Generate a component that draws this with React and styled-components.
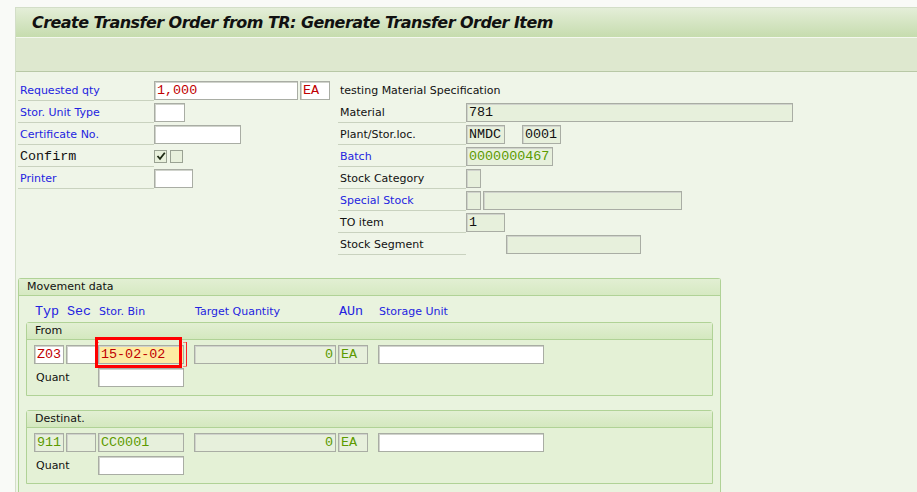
import styled, { createGlobalStyle } from "styled-components"

const GlobalStyle = createGlobalStyle`
    html, body {
        margin: 0;
        padding: 0;
        background: #f9faf7;
        height: 100%;
        overflow: hidden;
    }
    * { box-sizing: border-box; }
`

// x positions of the movement-data grid: field, gap, field, gap...
const MOVE_COLS = "30px 2px 30px 2px 86px 10px 142px 2px 30px 10px 166px"

const Field = ({ w, variant = "input", color, align, children }) => (
    <FieldBox $w={w} $variant={variant} $color={color} $align={align}>
        {children}
    </FieldBox>
)

const App = () => {
    return <>
        <GlobalStyle />
        <Window>
            <TitleBar>
                <Title>Create Transfer Order from TR: Generate Transfer Order Item</Title>
            </TitleBar>
            <Toolbar />
            <Content>
                <TopSection>
                    <LeftCol>
                        <Row>
                            <Label $blue>Requested qty</Label>
                            <Field w={144} color="#c00000">1,000</Field>
                            <Field w={30} color="#c00000">EA</Field>
                        </Row>
                        <Row>
                            <Label $blue>Stor. Unit Type</Label>
                            <Field w={31} />
                        </Row>
                        <Row>
                            <Label $blue>Certificate No.</Label>
                            <Field w={87} />
                        </Row>
                        <Row>
                            <Label $mono>Confirm</Label>
                            <CheckGroup>
                                <CheckBox>
                                    <svg width="10" height="10" viewBox="0 0 10 10">
                                        <path d="M1.5 5 L4 7.8 L8.8 1.8" fill="none" stroke="#1e2a14" strokeWidth="1.8" />
                                    </svg>
                                </CheckBox>
                                <CheckBox />
                            </CheckGroup>
                        </Row>
                        <Row>
                            <Label $blue>Printer</Label>
                            <Field w={39} />
                        </Row>
                    </LeftCol>
                    <RightCol>
                        <Row>
                            <Caption>testing Material Specification</Caption>
                        </Row>
                        <Row>
                            <Label $wide>Material</Label>
                            <Field w={327} variant="readonly">781</Field>
                        </Row>
                        <Row>
                            <Label $wide>Plant/Stor.loc.</Label>
                            <Field w={39} variant="readonly">NMDC</Field>
                            <Spacer $w={15} />
                            <Field w={39} variant="readonly">0001</Field>
                        </Row>
                        <Row>
                            <Label $wide $blue>Batch</Label>
                            <Field w={87} variant="readonly" color="#5c9a00">0000000467</Field>
                        </Row>
                        <Row>
                            <Label $wide>Stock Category</Label>
                            <Field w={15} variant="readonly" />
                        </Row>
                        <Row>
                            <Label $wide $blue>Special Stock</Label>
                            <Field w={15} variant="readonly" />
                            <Field w={199} variant="readonly" />
                        </Row>
                        <Row>
                            <Label $wide>TO item</Label>
                            <Field w={39} variant="readonly">1</Field>
                        </Row>
                        <Row>
                            <Label $wide>Stock Segment</Label>
                            <Spacer $w={40} />
                            <Field w={135} variant="readonly" />
                        </Row>
                    </RightCol>
                </TopSection>

                <Group>
                    <GroupHeader>Movement data</GroupHeader>
                    <GroupBody>
                        <MoveGrid $header>
                            <ColHead $col={1} $mono>Typ</ColHead>
                            <ColHead $col={3} $mono>Sec</ColHead>
                            <ColHead $col={5}>Stor. Bin</ColHead>
                            <ColHead $col={7}>Target Quantity</ColHead>
                            <ColHead $col={9} $mono>AUn</ColHead>
                            <ColHead $col={11}>Storage Unit</ColHead>
                        </MoveGrid>
                        <SubGroup>
                            <SubHeader>From</SubHeader>
                            <SubBody>
                                <MoveGrid>
                                    <Cell $col={1}><Field w={30} color="#c00000">Z03</Field></Cell>
                                    <Cell $col={3}><Field w={30} /></Cell>
                                    <Cell $col={5}>
                                        <Focus>
                                            <Field w={86} variant="highlight" color="#c00000">15-02-02</Field>
                                            <FocusBracket />
                                            <Marker />
                                        </Focus>
                                    </Cell>
                                    <Cell $col={7}><Field w={142} variant="readonly" color="#5c9a00" align="right">0</Field></Cell>
                                    <Cell $col={9}><Field w={30} variant="readonly" color="#5c9a00">EA</Field></Cell>
                                    <Cell $col={11}><Field w={166} /></Cell>
                                </MoveGrid>
                                <QuantRow>
                                    <QuantLabel>Quant</QuantLabel>
                                    <Field w={86} />
                                </QuantRow>
                            </SubBody>
                        </SubGroup>
                        <SubGroup>
                            <SubHeader>Destinat.</SubHeader>
                            <SubBody>
                                <MoveGrid>
                                    <Cell $col={1}><Field w={30} variant="readonly" color="#5c9a00">911</Field></Cell>
                                    <Cell $col={3}><Field w={30} variant="readonly" /></Cell>
                                    <Cell $col={5}><Field w={86} variant="readonly" color="#5c9a00">CC0001</Field></Cell>
                                    <Cell $col={7}><Field w={142} variant="readonly" color="#5c9a00" align="right">0</Field></Cell>
                                    <Cell $col={9}><Field w={30} variant="readonly" color="#5c9a00">EA</Field></Cell>
                                    <Cell $col={11}><Field w={166} /></Cell>
                                </MoveGrid>
                                <QuantRow>
                                    <QuantLabel>Quant</QuantLabel>
                                    <Field w={86} />
                                </QuantRow>
                            </SubBody>
                        </SubGroup>
                    </GroupBody>
                </Group>
            </Content>
        </Window>
    </>
}

const Window = styled.div`
    margin: 7px 0 0 15px;
    height: 485px;
    background: #eff5e8;
    border-left: 1px solid #d3dec8;
    border-top: 1px solid #d3dec8;
    display: flex;
    flex-direction: column;
    overflow: hidden;
`
const TitleBar = styled.div`
    flex: none;
    height: 30px;
    display: flex;
    align-items: center;
    padding-left: 16px;
    background: linear-gradient(#e4eed8, #c6dcae);
    border-bottom: 1px solid #f4f8ee;
`
const Title = styled.h1`
    margin: 0;
    font-family: "DejaVu Sans", sans-serif;
    font-size: 16px;
    font-weight: bold;
    font-style: italic;
    letter-spacing: -0.55px;
    color: #111;
`
const Toolbar = styled.div`
    flex: none;
    height: 34px;
    background: #dee8cf;
    border-bottom: 1px solid #b8c8a6;
`
const Content = styled.div`
    flex: 1;
    padding: 7px 0 0 2px;
    display: flex;
    flex-direction: column;
`
const TopSection = styled.div`
    display: flex;
`
const LeftCol = styled.div`
    width: 320px;
    display: flex;
    flex-direction: column;
`
const RightCol = styled.div`
    display: flex;
    flex-direction: column;
`
const Row = styled.div`
    height: 22px;
    display: flex;
    align-items: center;
`
const Label = styled.div`
    width: ${p => p.$wide ? "128px" : "136px"};
    height: 22px;
    padding: 3px 0 0 2px;
    border-bottom: 1px solid #c9d2bf;
    align-self: flex-start;
    line-height: 17px;
    color: ${p => p.$blue ? "#2424e0" : "#111"};
    font-family: ${p => p.$mono ? `"Liberation Mono", monospace` : `"DejaVu Sans", sans-serif`};
    font-size: ${p => p.$mono ? "13.4px" : "11px"};
    white-space: nowrap;
`
const Caption = styled.div`
    padding-left: 2px;
    font-family: "DejaVu Sans", sans-serif;
    font-size: 11px;
    color: #111;
`
const Spacer = styled.div`
    width: ${p => p.$w}px;
    flex: none;
`
const FieldBox = styled.div`
    width: ${p => p.$w}px;
    height: 19px;
    flex: none;
    margin-right: 2px;
    padding: 0 2px;
    display: flex;
    align-items: center;
    justify-content: ${p => p.$align === "right" ? "flex-end" : "flex-start"};
    border: 1px solid #a9ada4;
    box-shadow: inset 1px 1px 0 #d0d3cc;
    background: ${p => p.$variant === "readonly" ? "#e7f0dc" : p.$variant === "highlight" ? "#fdeca2" : "#fff"};
    color: ${p => p.$color || "#111"};
    font-family: "Liberation Mono", monospace;
    font-size: 13.4px;
    white-space: nowrap;
    overflow: hidden;
`
const CheckGroup = styled.div`
    display: flex;
    gap: 3px;
`
const CheckBox = styled.div`
    width: 13px;
    height: 13px;
    border: 1px solid #9aa293;
    background: #e8f0dc;
    display: flex;
    align-items: center;
    justify-content: center;
`
const Group = styled.div`
    margin-top: 23px;
    width: 703px;
    flex: 1;
    border: 1px solid #b0d296;
    border-bottom: none;
    border-radius: 3px 3px 0 0;
    background: #e9f3de;
    display: flex;
    flex-direction: column;
`
const GroupHeader = styled.div`
    height: 17px;
    padding-left: 8px;
    line-height: 16px;
    background: linear-gradient(#e2efd3, #d6e9c2);
    border-bottom: 1px solid #b0d296;
    font-family: "DejaVu Sans", sans-serif;
    font-size: 11px;
    color: #111;
`
const GroupBody = styled.div`
    padding: 5px 7px 0 7px;
    display: flex;
    flex-direction: column;
`
const MoveGrid = styled.div`
    display: grid;
    grid-template-columns: ${MOVE_COLS};
    height: ${p => p.$header ? "20px" : "22px"};
    align-items: center;
    padding-left: 7px;
`
const ColHead = styled.div`
    grid-column: ${p => p.$col};
    padding-left: 2px;
    white-space: nowrap;
    color: #2424e0;
    font-family: ${p => p.$mono ? `"Liberation Mono", monospace` : `"DejaVu Sans", sans-serif`};
    font-size: ${p => p.$mono ? "13.4px" : "11px"};
`
const Cell = styled.div`
    grid-column: ${p => p.$col};
`
const SubGroup = styled.div`
    margin-top: 1px;
    margin-bottom: 13px;
    height: 74px;
    border: 1px solid #b0d296;
    border-radius: 3px 3px 0 0;
    background: #e4f1d6;
`
const SubHeader = styled.div`
    height: 17px;
    padding-left: 8px;
    line-height: 16px;
    background: linear-gradient(#e2efd3, #d4e8bf);
    border-bottom: 1px solid #b0d296;
    font-family: "DejaVu Sans", sans-serif;
    font-size: 11px;
    color: #111;
`
const SubBody = styled.div`
    padding-top: 3px;
`
const QuantRow = styled.div`
    height: 24px;
    display: flex;
    align-items: center;
    padding-left: 9px;
`
const QuantLabel = styled.div`
    width: 62px;
    font-family: "DejaVu Sans", sans-serif;
    font-size: 11px;
    color: #111;
`
const Focus = styled.div`
    position: relative;
    width: 86px;
`
const FocusBracket = styled.div`
    position: absolute;
    left: -3px;
    top: -3px;
    width: 92px;
    height: 25px;
    border: 1px solid #f22;
    pointer-events: none;
    clip-path: polygon(0 0, 4px 0, 4px 1px, 1px 1px, 1px calc(100% - 1px), 4px calc(100% - 1px), 4px 100%, 0 100%, 0 0, 100% 0, 100% 100%, calc(100% - 4px) 100%, calc(100% - 4px) calc(100% - 1px), calc(100% - 1px) calc(100% - 1px), calc(100% - 1px) 1px, calc(100% - 4px) 1px, calc(100% - 4px) 0, 100% 0);
`
const Marker = styled.div`
    position: absolute;
    left: -3px;
    top: -8px;
    width: 87px;
    height: 31px;
    border: 3px solid #f00;
    pointer-events: none;
`

export default App
